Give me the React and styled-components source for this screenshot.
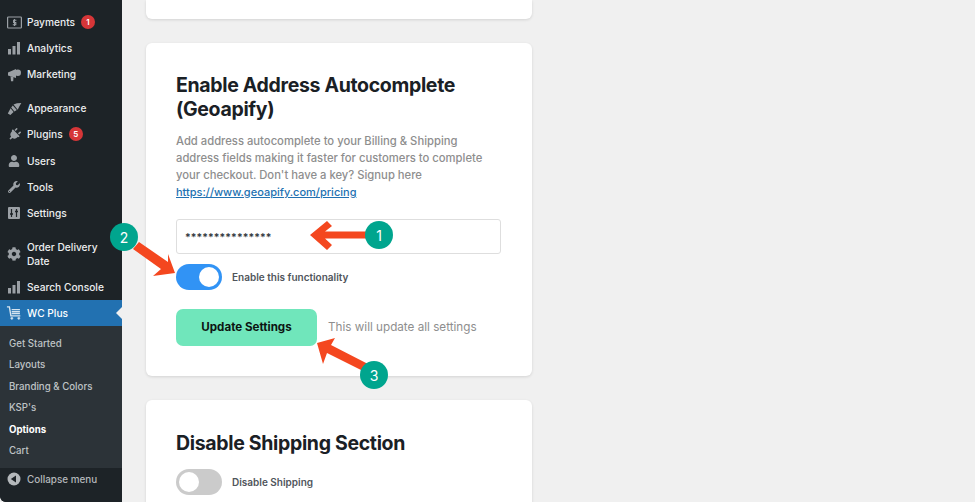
import React from "react"
import styled, { createGlobalStyle } from "styled-components"
import { FaPlug, FaUser, FaWrench, FaCog } from "react-icons/fa"

const Global = createGlobalStyle`
  html, body {
    margin: 0;
    padding: 0;
    height: 502px;
    overflow: hidden;
    background: #f0f0f0;
  }
  * { box-sizing: border-box; }
`

const Page = styled.div`
  position: relative;
  display: flex;
  width: 975px;
  height: 502px;
  overflow: hidden;
  font-family: Inter, "Liberation Sans", sans-serif;
  background: #f0f0f0;
`

const Sidebar = styled.nav`
  width: 122px;
  height: 502px;
  flex: none;
  display: flex;
  flex-direction: column;
  padding-top: 9px;
  background: #1d2327;
  border-bottom-left-radius: 6px;
  overflow: hidden;
`

const MenuGroup = styled.div`
  display: flex;
  flex-direction: column;
  margin-bottom: ${(p) => p.$gap ?? 8}px;
`

const MenuItem = styled.div`
  position: relative;
  display: flex;
  align-items: center;
  min-height: ${(p) => p.$height || 26}px;
  padding-left: 6px;
  font-size: 10.2px;
  font-weight: 500;
  line-height: 14px;
  color: ${(p) => (p.$active ? "#fff" : "#eceeef")};
  background: ${(p) => (p.$active ? "#2271b1" : "transparent")};
`

const IconSlot = styled.span`
  width: 16px;
  height: 16px;
  margin-right: 5px;
  flex: none;
  display: flex;
  align-items: center;
  justify-content: center;
  color: ${(p) => (p.$active ? "#d5e3ef" : "#9ba0a5")};
  svg { display: block; }
`

const TiltedPlug = styled(FaPlug)`
  transform: rotate(45deg);
`

const Badge = styled.span`
  width: 14px;
  height: 14px;
  margin-left: 6px;
  border-radius: 50%;
  display: inline-flex;
  align-items: center;
  justify-content: center;
  font-size: 8px;
  font-weight: 600;
  color: #fff;
  background: #d63638;
`

const ActiveNotch = styled.span`
  position: absolute;
  right: 0;
  top: 50%;
  margin-top: -6px;
  border: 6px solid transparent;
  border-left: 0;
  border-right-color: #f0f0f0;
`

const SubMenu = styled.div`
  display: flex;
  flex-direction: column;
  height: 142px;
  padding-top: 6.5px;
  background: #2c3338;
`

const SubItem = styled.div`
  height: 21.5px;
  padding-left: 9px;
  display: flex;
  align-items: center;
  font-size: 9.7px;
  font-weight: ${(p) => (p.$current ? 700 : 500)};
  color: ${(p) => (p.$current ? "#fff" : "#bfc3c6")};
`

const Collapse = styled.div`
  flex: 1;
  display: flex;
  align-items: flex-start;
  padding: 3px 0 0 6px;
  font-size: 9.9px;
  font-weight: 500;
  line-height: 16px;
  color: #b4b8bb;
  background: #1d2327;
`

const Main = styled.main`
  display: flex;
  flex-direction: column;
  gap: 24px;
  padding-left: 24px;
`

const Card = styled.section`
  width: 386px;
  flex: none;
  height: ${(p) => p.$height}px;
  padding: ${(p) => (p.$stub ? 0 : p.$top)}px 30px 0;
  background: #fff;
  border-radius: ${(p) => (p.$stub ? "0 0 6px 6px" : "6px")};
  box-shadow: 0 1px 3px rgba(0, 0, 0, 0.12);
`

const Title = styled.h2`
  margin: 0;
  font-size: 19.5px;
  font-weight: 700;
  line-height: 23.5px;
  letter-spacing: -0.33px;
  color: #1a2025;
`

const Description = styled.p`
  margin: 11.5px 0 0;
  width: 325px;
  font-size: 11.25px;
  font-weight: 500;
  line-height: 17.1px;
  color: #8e8e8e;
`

const DocLink = styled.a`
  font-size: 11px;
  color: #2271b1;
  text-decoration: underline;
`

const KeyInput = styled.div`
  width: 325px;
  height: 35px;
  margin-top: 18px;
  padding: 3px 8px 0;
  display: flex;
  align-items: center;
  border: 1px solid #dedede;
  border-radius: 3px;
  font-size: 10.5px;
  font-weight: 600;
  letter-spacing: 0.1px;
  color: #33383d;
`

const ToggleRow = styled.div`
  display: flex;
  align-items: center;
  gap: 10px;
  margin-top: ${(p) => p.$top}px;
  font-size: 10px;
  font-weight: 600;
  color: #50555b;
`

const Track = styled.span`
  width: 46px;
  height: 26px;
  padding: 3px;
  flex: none;
  display: flex;
  justify-content: ${(p) => (p.$on ? "flex-end" : "flex-start")};
  border-radius: 13px;
  background: ${(p) => (p.$on ? "#3193f5" : "#cbcbcb")};
`

const Knob = styled.span`
  width: 20px;
  height: 20px;
  border-radius: 50%;
  background: #fff;
`

const ActionRow = styled.div`
  display: flex;
  align-items: center;
  gap: 11px;
  margin-top: 19px;
`

const UpdateButton = styled.button`
  width: 141px;
  height: 37px;
  padding: 0;
  border: none;
  border-radius: 7px;
  font-family: inherit;
  font-size: 11.6px;
  font-weight: 700;
  color: #0d1512;
  background: #70e6bb;
`

const Hint = styled.span`
  font-size: 11.7px;
  color: #8e8e8e;
`

const Arrows = styled.svg`
  position: absolute;
  left: 0;
  top: 0;
  pointer-events: none;
`

const Step = styled.span`
  position: absolute;
  left: ${(p) => p.$x - 14}px;
  top: ${(p) => p.$y - 14}px;
  width: 28px;
  height: 28px;
  border-radius: 50%;
  display: flex;
  align-items: center;
  justify-content: center;
  font-size: 14px;
  color: #fff;
  background: #00a58e;
`

const PaymentsIcon = () => (
  <svg width="15" height="13" viewBox="0 0 15 13">
    <rect x="0.6" y="1" width="13.8" height="11" rx="0.8" fill="none" stroke="currentColor" strokeWidth="1.2" />
    <path d="M9.4 4.3H6.6v2.2h2.2v2.2H5.8M7.5 3v7" fill="none" stroke="currentColor" strokeWidth="1.1" />
  </svg>
)

const BarsIcon = () => (
  <svg width="14" height="14" viewBox="0 0 14 14" fill="currentColor">
    <rect x="1" y="8" width="3" height="5.5" />
    <rect x="5.5" y="5" width="3" height="8.5" />
    <rect x="10" y="1" width="3" height="12.5" />
  </svg>
)

const MegaphoneIcon = () => (
  <svg width="15" height="15" viewBox="0 0 15 15" fill="currentColor">
    <path d="M1 5.500 9 2v9L1 8.500z" />
    <circle cx="10.800" cy="5.800" r="3.200" />
    <path d="M3.500 9.200 6.500 10.200 6.200 14.200H4z" />
  </svg>
)

const BrushIcon = () => (
  <svg width="15" height="15" viewBox="0 0 15 15" fill="currentColor">
    <path d="M6.500 3.500 10 2.200l4.300-.2-2 3.600-1.600 3.200z" />
    <path d="M5.800 4.400 9.800 9 7.400 10.500 4.200 6.400zM3.600 7.200l3 3.900-3.200 3-2.600-1.600z" />
  </svg>
)

const SlidersIcon = () => (
  <svg width="14" height="14" viewBox="0 0 14 14">
    <rect x="1" y="1" width="12" height="12" rx="1" fill="currentColor" />
    <path d="M4.500 3v8M9.500 3v8" stroke="#1d2327" strokeWidth="1.2" />
    <path d="M3 8h3M8 5.500h3" stroke="#1d2327" strokeWidth="1.600" />
  </svg>
)

const CartIcon = () => (
  <svg width="17" height="16" viewBox="0 0 17 16" fill="none" stroke="currentColor">
    <path d="M1 1.500h2.600l1.600 9.600h10" strokeWidth="1.500" />
    <path d="M6 4.500h8.800M6 6.500h8.800M6 8.500h8.800" strokeWidth="1.400" />
    <circle cx="6.200" cy="13.600" r="1.200" fill="currentColor" strokeWidth="0.5" />
    <circle cx="13.600" cy="13.600" r="1.200" fill="currentColor" strokeWidth="0.5" />
  </svg>
)

const CollapseIcon = () => (
  <svg width="14" height="14" viewBox="0 0 14 14">
    <circle cx="7" cy="7" r="6.500" fill="#b4b8bb" />
    <path d="M9 3.500v7L3.800 7z" fill="#1d2327" />
  </svg>
)

const topMenu = [
  { label: "Payments", icon: <PaymentsIcon />, badge: 1 },
  { label: "Analytics", icon: <BarsIcon /> },
  { label: "Marketing", icon: <MegaphoneIcon /> },
]

const midMenu = [
  { label: "Appearance", icon: <BrushIcon /> },
  { label: "Plugins", icon: <TiltedPlug size={13} />, badge: 5 },
  { label: "Users", icon: <FaUser size={12} />, height: 27 },
  { label: "Tools", icon: <FaWrench size={12} /> },
  { label: "Settings", icon: <SlidersIcon /> },
]

const subMenu = ["Get Started", "Layouts", "Branding & Colors", "KSP's", "Options", "Cart"]

const renderItem = (item) => (
  <MenuItem key={item.label} $height={item.height}>
    <IconSlot>{item.icon}</IconSlot>
    {item.label}
    {item.badge && <Badge>{item.badge}</Badge>}
  </MenuItem>
)

const App = () => (
  <Page>
    <Global />
    <Sidebar>
      <MenuGroup>{topMenu.map(renderItem)}</MenuGroup>
      <MenuGroup>{midMenu.map(renderItem)}</MenuGroup>
      <MenuGroup $gap={0}>
        <MenuItem $height={40}>
          <IconSlot><FaCog size={14} /></IconSlot>
          <span>Order Delivery<br />Date</span>
        </MenuItem>
        <MenuItem>
          <IconSlot><BarsIcon /></IconSlot>
          Search Console
        </MenuItem>
      </MenuGroup>
      <MenuItem $active>
        <IconSlot $active><CartIcon /></IconSlot>
        WC Plus
        <ActiveNotch />
      </MenuItem>
      <SubMenu>
        {subMenu.map((name) => (
          <SubItem key={name} $current={name === "Options"}>{name}</SubItem>
        ))}
      </SubMenu>
      <Collapse>
        <IconSlot><CollapseIcon /></IconSlot>
        Collapse menu
      </Collapse>
    </Sidebar>

    <Main>
      <Card $stub $height={19} />
      <Card $top={31} $height={333}>
        <Title>Enable Address Autocomplete (Geoapify)</Title>
        <Description>
          Add address autocomplete to your Billing &amp; Shipping address fields making it faster for
          customers to complete your checkout. Don't have a key? Signup here{" "}
          <DocLink href="#">https://www.geoapify.com/pricing</DocLink>
        </Description>
        <KeyInput>***************</KeyInput>
        <ToggleRow $top={10}>
          <Track $on><Knob /></Track>
          Enable this functionality
        </ToggleRow>
        <ActionRow>
          <UpdateButton>Update Settings</UpdateButton>
          <Hint>This will update all settings</Hint>
        </ActionRow>
      </Card>
      <Card $top={32} $height={140}>
        <Title>Disable Shipping Section</Title>
        <ToggleRow $top={13}>
          <Track><Knob /></Track>
          Disable Shipping
        </ToggleRow>
      </Card>
    </Main>

    <Arrows width="975" height="502" viewBox="0 0 975 502">
      <g fill="#f4471f">
        <path d="M310 235 327 221 332 226 325 231.500H367V238.500H325L332 245 327 250z" />
        <path d="M139 242 168 262 168 254 175 273 153 276 161 269 133 249z" />
        <path d="M317 343 335 338 331 345 368 364 363 371 327 353 323 364z" />
      </g>
    </Arrows>
    <Step $x={379} $y={235}>1</Step>
    <Step $x={124} $y={237}>2</Step>
    <Step $x={374} $y={375}>3</Step>
  </Page>
)

export default App
